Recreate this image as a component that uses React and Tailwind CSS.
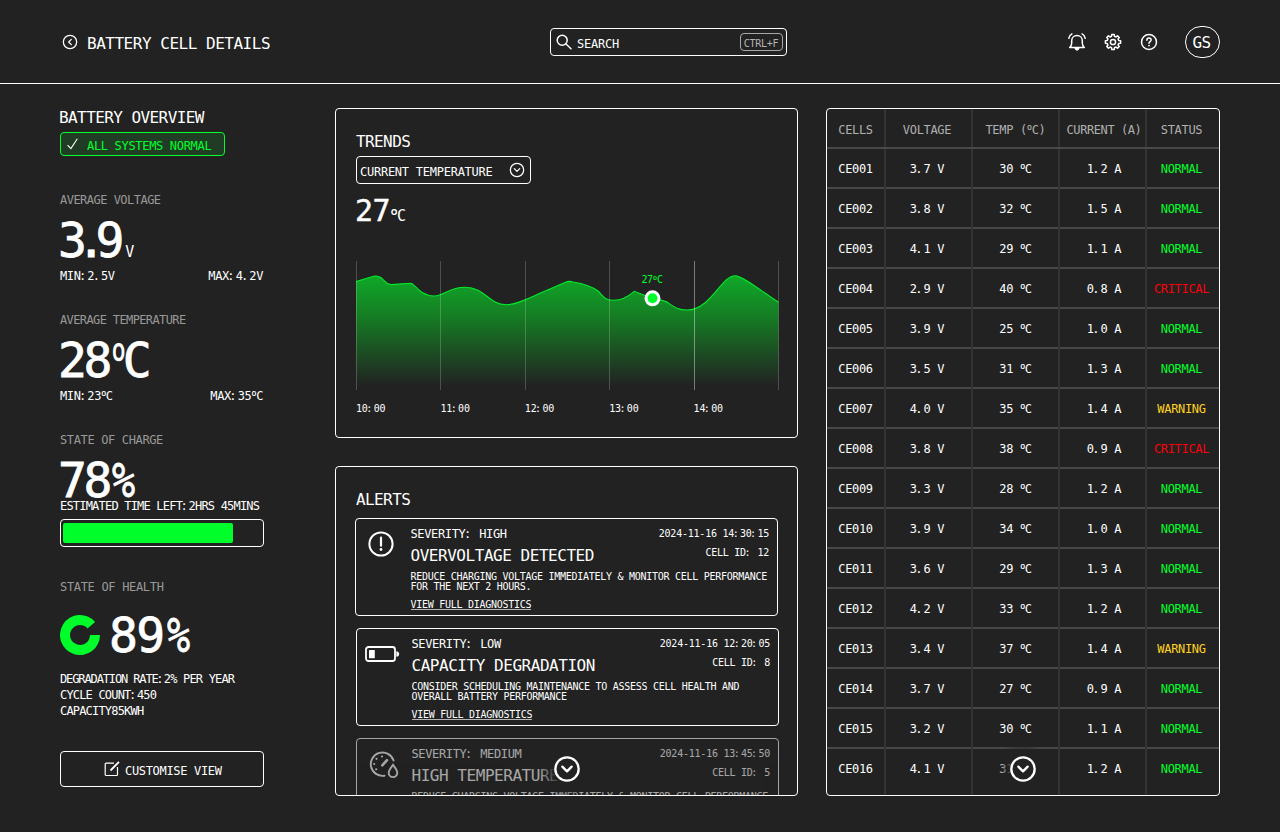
import React from 'react';
import { CircleChevronLeft, CircleChevronDown } from 'lucide-react';

const readings = [
  ['CE001', '3.7', '30', '1.2', 'NORMAL'],
  ['CE002', '3.8', '32', '1.5', 'NORMAL'],
  ['CE003', '4.1', '29', '1.1', 'NORMAL'],
  ['CE004', '2.9', '40', '0.8', 'CRITICAL'],
  ['CE005', '3.9', '25', '1.0', 'NORMAL'],
  ['CE006', '3.5', '31', '1.3', 'NORMAL'],
  ['CE007', '4.0', '35', '1.4', 'WARNING'],
  ['CE008', '3.8', '38', '0.9', 'CRITICAL'],
  ['CE009', '3.3', '28', '1.2', 'NORMAL'],
  ['CE010', '3.9', '34', '1.0', 'NORMAL'],
  ['CE011', '3.6', '29', '1.3', 'NORMAL'],
  ['CE012', '4.2', '33', '1.2', 'NORMAL'],
  ['CE013', '3.4', '37', '1.4', 'WARNING'],
  ['CE014', '3.7', '27', '0.9', 'NORMAL'],
  ['CE015', '3.2', '30', '1.1', 'NORMAL'],
  ['CE016', '4.1', '31', '1.2', 'NORMAL'],
];

const statusColor = {
  NORMAL: 'text-[#00ff2a]',
  WARNING: 'text-[#ffd21f]',
  CRITICAL: 'text-[#ff0008]',
};

const alerts = [
  {
    severity: 'HIGH',
    time: '2024-11-16 14:30:15',
    cell: '12',
    title: 'OVERVOLTAGE DETECTED',
    lines: ['REDUCE CHARGING VOLTAGE IMMEDIATELY & MONITOR CELL PERFORMANCE', 'FOR THE NEXT 2 HOURS.'],
    icon: 'alert',
  },
  {
    severity: 'LOW',
    time: '2024-11-16 12:20:05',
    cell: '8',
    title: 'CAPACITY DEGRADATION',
    lines: ['CONSIDER SCHEDULING MAINTENANCE TO ASSESS CELL HEALTH AND', 'OVERALL BATTERY PERFORMANCE'],
    icon: 'battery',
  },
  {
    severity: 'MEDIUM',
    time: '2024-11-16 13:45:50',
    cell: '5',
    title: 'HIGH TEMPERATURE',
    lines: ['REDUCE CHARGING VOLTAGE IMMEDIATELY & MONITOR CELL PERFORMANCE'],
    icon: 'gauge',
  },
];

const hours = ['10:00', '11:00', '12:00', '13:00', '14:00'];

const curve =
  'M356 281.7 L371 277 Q377 274.5 381.5 278 C385 281 386 284.6 391 284.6 C399 284.4 404 283.4 411 283.2 C415 284 420 296 434 296 C445 296 448 287.2 465 287.2 C485 287.2 489 304.8 506 304.8 C516 304.8 527 299 540 293.3 L566 282 Q569 280.8 573 282 C585 284 592 286.5 598 291 C604 297 605 300.3 614 300.3 C624 300.3 631 294 634.3 291.3 L645 295.5 L666 301.6 C672 305 676 310 687 310 C711 310 721 275.7 735 275.7 C742 275.7 760 290 778.5 302.3';

// Colons and full stops hang at the left of their slot
const Txt = ({ children }) =>
  children.split(/([:.])/).map((part, i) =>
    part === ':' || part === '.' ? (
      <span key={i} className="-ml-[1.5px] mr-[1.5px]">{part}</span>
    ) : (
      part
    )
  );

// Label and value sit tight against each other, so this space takes no room
const Tight = () => <span className="tracking-[-7.22px]"> </span>;

const Deg = () => <span className="font-[Roboto] text-[12px] tracking-[-0.6px]">º</span>;

const Percent = ({ className }) => (
  <span className={`inline-block w-6 origin-left scale-x-[0.8] tracking-normal ${className}`}>%</span>
);

const SearchIcon = () => (
  <svg width="16" height="16" viewBox="0 0 16 16" fill="none" stroke="currentColor" strokeWidth="1.500" strokeLinecap="round">
    <circle cx="6.200" cy="6.200" r="5" />
    <path d="M10 10l5 4.700" />
  </svg>
);

const BellIcon = () => (
  <svg width="20" height="20" viewBox="0 0 20 20" fill="none" stroke="currentColor" strokeWidth="1.500" strokeLinecap="round" strokeLinejoin="round">
    <path d="M2.700 15.500h14.600c-1.500-1.300-2-2.600-2-4.500V8.700c0-3-2.300-5.200-5.300-5.200s-5.300 2.200-5.300 5.200V11c0 1.900-.5 3.200-2 4.500z" />
    <path d="M1.800 6.300C2.200 4.300 3.200 2.700 4.900 1.800M18.200 6.300C17.800 4.300 16.800 2.700 15.100 1.800" />
    <path d="M8 16h4c0 1.500-.9 2.200-2 2.200S8 17.500 8 16z" fill="currentColor" strokeWidth=".8" />
  </svg>
);

const gearPath = () => {
  const points = [];
  for (let i = 0; i < 8; i++) {
    [[-14, 5.9], [-9, 7.7], [9, 7.7], [14, 5.9]].forEach(([offset, r]) => {
      const a = ((i * 45 + offset) * Math.PI) / 180;
      points.push(`${(r * Math.cos(a)).toFixed(2)} ${(r * Math.sin(a)).toFixed(2)}`);
    });
  }
  return `M${points.join('L')}Z`;
};

const GearIcon = () => (
  <svg width="18" height="18" viewBox="-9 -9 18 18" fill="none" stroke="currentColor" strokeWidth="1.500" strokeLinejoin="round">
    <path d={gearPath()} />
    <circle r="2.600" />
  </svg>
);

const HelpIcon = () => (
  <svg width="18" height="18" viewBox="0 0 18 18" fill="none" stroke="currentColor" strokeWidth="1.500" strokeLinecap="round">
    <circle cx="9" cy="9" r="7.500" />
    <path d="M6.900 7.200c0-1.300.9-2.100 2.100-2.100s2.100.8 2.100 1.900c0 1.500-2.100 1.600-2.100 3.200" />
    <circle cx="9" cy="12.600" r=".9" fill="currentColor" stroke="none" />
  </svg>
);

const AlertIcon = () => (
  <svg width="26" height="26" viewBox="0 0 26 26" fill="none" stroke="currentColor">
    <circle cx="13" cy="13" r="11.600" strokeWidth="2" />
    <path d="M13 6.700v8" strokeWidth="2.200" strokeLinecap="round" />
    <circle cx="13" cy="18.500" r="1.400" fill="currentColor" stroke="none" />
  </svg>
);

const BatteryIcon = () => (
  <svg width="35" height="16" viewBox="0 0 35 16" fill="none">
    <rect x="1" y="1" width="29" height="14" rx="2.500" stroke="currentColor" strokeWidth="1.800" />
    <rect x="4" y="4" width="5.800" height="8.300" rx=".5" fill="currentColor" />
    <path d="M31.300 5.200C33.200 5.400 34.200 6.500 34.200 8S33.200 10.600 31.300 10.800z" fill="currentColor" />
  </svg>
);

const GaugeIcon = () => (
  <svg width="30" height="28" viewBox="0 0 30 28" fill="none" stroke="currentColor" strokeWidth="1.900" strokeLinecap="round" className="ml-[3px] mt-[2px]">
    <path d="M15.500 24.700A11.700 11.700 0 1 1 24.600 9.500" />
    <path d="M13.300 14.300L18 9.200" strokeWidth="2.600" />
    <path d="M24 13.800c2.200 3 4.300 5.500 4.300 8a4.300 4.300 0 0 1-8.600 0c0-2.500 2.100-5 4.300-8z" />
    <g fill="currentColor" stroke="none">
      <circle cx="13" cy="5.500" r="1.100" />
      <circle cx="7.500" cy="7.800" r="1.100" />
      <circle cx="5.200" cy="13" r="1.100" />
      <circle cx="7.200" cy="18.300" r="1.100" />
    </g>
  </svg>
);

const EditIcon = () => (
  <svg width="16" height="16" viewBox="0 0 16 16" fill="none" stroke="currentColor" strokeWidth="1.200">
    <path d="M10 2.200H2.200a1 1 0 0 0-1 1v10.300a1 1 0 0 0 1 1h10.300a1 1 0 0 0 1-1V6" />
    <path d="M6.500 9.500L15 .8" strokeWidth="1.800" />
  </svg>
);

const alertIcons = {
  alert: <AlertIcon />,
  battery: <BatteryIcon />,
  gauge: <GaugeIcon />,
};

const Label = ({ children, className }) => (
  <p className={`h-4 text-[12px] leading-4 text-[#999999] ${className}`}>{children}</p>
);

const Header = () => (
  <header className="flex h-[84px] items-center justify-between border-b border-white px-[60px]">
    <div className="flex w-[490px] items-center">
      <CircleChevronLeft size={16} strokeWidth={1.900} className="ml-[2px] mt-[1px]" />
      <h1 className="ml-[9px] mt-[4px] text-[16px] leading-5 tracking-[-0.48px]">BATTERY CELL DETAILS</h1>
    </div>
    <div className="flex h-7 w-[237px] items-center rounded-[4px] border border-white pl-[5px] pr-[3px]">
      <SearchIcon />
      <span className="ml-[5px] mt-[4px] flex-1 text-[12px] leading-4 tracking-[-0.22px]">SEARCH</span>
      <kbd className="flex h-[18px] w-[43px] items-center justify-center rounded-[4px] border border-[#a8a8a8] pr-px pt-[3px] font-['DejaVu_Sans_Mono'] text-[10px] tracking-[-0.25px] text-[#b4b4b4]">
        CTRL+F
      </kbd>
    </div>
    <div className="flex w-[433px] items-center justify-end">
      <button className="mr-[17px]"><BellIcon /></button>
      <button className="mr-[18px]"><GearIcon /></button>
      <button className="mr-[27px]"><HelpIcon /></button>
      <span className="flex h-8 w-[35px] items-center justify-center rounded-full border border-white pr-[2px] pt-[3px] text-[16px] tracking-[-0.6px]">
        GS
      </span>
    </div>
  </header>
);

const Overview = () => (
  <aside className="w-[204px]">
    <h2 className="-ml-px h-[18px] text-[16px] leading-[20px] tracking-[-0.58px]">BATTERY OVERVIEW</h2>
    <div className="mt-[6px] flex h-6 w-[165px] items-center rounded-[4px] border border-[#00ff2a] bg-[#203c24] text-[#00ff2a]">
      <svg width="11" height="12" viewBox="0 0 11 12" fill="none" stroke="#fff" strokeWidth="1.100" className="ml-[6px]">
        <path d="M.6 7.200L3.900 10.600 10.300.8" />
      </svg>
      <span className="ml-[9px] mt-[3px] text-[12px] leading-4 tracking-[-0.32px]">ALL SYSTEMS NORMAL</span>
    </div>

    <Label className="mt-9 tracking-[-0.52px]">AVERAGE VOLTAGE</Label>
    <div className="mt-3 -ml-[2px] flex h-[42px] items-baseline text-[48px] leading-[40px] [-webkit-text-stroke:0.8px_white]">
      <span className="tracking-[-10.200px]">3.</span>9
      <span className="ml-px text-[15px] tracking-normal [-webkit-text-stroke:0px]">V</span>
    </div>
    <div className="mt-[6px] flex h-4 justify-between pr-px text-[12px] leading-4 tracking-[-0.400px]">
      <span><Txt>MIN:</Txt><Tight /><Txt>2.5V</Txt></span>
      <span><Txt>MAX:</Txt><Tight /><Txt>4.2V</Txt></span>
    </div>

    <Label className="mt-7 tracking-[-0.62px]">AVERAGE TEMPERATURE</Label>
    <div className="mt-3 -ml-[2px] flex h-[42px] items-baseline text-[48px] leading-[40px] tracking-[-3.500px] [-webkit-text-stroke:0.8px_white]">
      28
      <span className="ml-[2px] inline-block w-[12px] origin-left scale-x-[0.7] font-[Roboto] tracking-normal [-webkit-text-stroke:0px]">º</span>
      <span>C</span>
    </div>
    <div className="mt-[6px] flex h-4 justify-between pr-px text-[12px] leading-4 tracking-[-0.400px]">
      <span><Txt>MIN:</Txt><Tight />23<Deg />C</span>
      <span><Txt>MAX:</Txt><Tight />35<Deg />C</span>
    </div>

    <Label className="mt-7 tracking-[-0.36px]">STATE OF CHARGE</Label>
    <div className="mt-3 -ml-[2px] flex h-[42px] text-[48px] leading-[40px] tracking-[-3.500px] [-webkit-text-stroke:0.8px_white]">
      78<Percent className="ml-[3px]" />
    </div>
    <p className="-mt-1 h-4 whitespace-nowrap text-[12px] leading-4 tracking-[-0.8px]">
      <Txt>ESTIMATED TIME LEFT:</Txt><Tight />2HRS 45MINS
    </p>
    <div className="mt-[5px] h-7 rounded-[4px] border border-white px-[2px] py-[3px]">
      <div className="h-5 w-[170px] rounded-[2px] bg-[#00ff2a]" />
    </div>

    <Label className="mt-8 tracking-[-0.32px]">STATE OF HEALTH</Label>
    <div className="mt-5 flex h-10 items-center">
      <svg width="40" height="40" viewBox="-20 -20 40 40">
        <path d="M20 0A20 20 0 1 1 15.100-13.100L7.500-6.600A10 10 0 1 0 10 0z" fill="#00ff2a" />
      </svg>
      <div className="ml-[9px] flex text-[48px] leading-10 tracking-[-1.600px] [-webkit-text-stroke:0.8px_white]">
        89<Percent className="ml-[3px]" />
      </div>
    </div>
    <div className="mt-4 whitespace-nowrap text-[12px] leading-4 tracking-[-0.820px]">
      <p><span className="tracking-[-1.120px]"><Txt>DEGRADATION RATE:</Txt></span><Tight />2% PER YEAR</p>
      <p><Txt>CYCLE COUNT:</Txt><Tight />450</p>
      <p>CAPACITY<Tight />85KWH</p>
    </div>
    <button className="mt-8 flex h-9 w-full items-center rounded-[4px] border border-white pl-[43px]">
      <EditIcon />
      <span className="ml-[5px] mt-[4px] text-[12px] leading-4 tracking-[-0.32px]">CUSTOMISE VIEW</span>
    </button>
  </aside>
);

const TrendChart = () => (
  <svg width="424" height="129" viewBox="356 261 424 129" className="mt-[37px] block">
    <defs>
      <linearGradient id="area" x1="0" y1="276" x2="0" y2="386" gradientUnits="userSpaceOnUse">
        <stop offset="0" stopColor="#0fa828" />
        <stop offset=".35" stopColor="#157f24" />
        <stop offset="1" stopColor="#222222" />
      </linearGradient>
    </defs>
    <path d={`${curve}V386H356z`} fill="url(#area)" />
    <path d={curve} fill="none" stroke="#00ea2a" strokeWidth="1.100" />
    {[356.5, 440.5, 525.5, 609.5, 694.5, 778.5].map((x) => (
      <path key={x} d={`M${x} 261V390`} stroke="#fff" strokeOpacity={x === 694.5 ? 0.4 : 0.2} />
    ))}
    <circle cx="652.500" cy="298.300" r="6.500" fill="#00ff2a" stroke="#fff" strokeWidth="3" />
    <text x="641.500" y="283" fontSize="10" letterSpacing="-0.4" fill="#00ff2a">
      27<tspan fontFamily="Roboto">º</tspan>C
    </text>
  </svg>
);

const Trends = () => (
  <section className="h-[330px] rounded-[4px] border border-white pl-5 pt-[22px]">
    <h2 className="h-5 text-[16px] leading-[22px] tracking-[-0.600px]">TRENDS</h2>
    <button className="mt-[5px] flex h-7 w-[175px] items-center justify-between rounded-[4px] border border-white pl-[3px] pr-[5px]">
      <span className="mt-[3px] text-[12px] leading-4 tracking-[-0.25px]">CURRENT TEMPERATURE</span>
      <CircleChevronDown size={16} strokeWidth={1.900} />
    </button>
    <div className="-ml-px mt-3 flex h-7 items-baseline text-[30px] leading-[29px] tracking-[-0.500px]">
      <span className="[-webkit-text-stroke:0.4px_white]">27</span>
      <span className="font-[Roboto] text-[17px] tracking-[-1px]">º</span>
      <span className="text-[15px]">C</span>
    </div>
    <TrendChart />
    <div className="mt-[11px] flex text-[10px] leading-4 tracking-[-0.150px]">
      {hours.map((h) => (
        <span key={h} className="w-[84.4px]"><Txt>{h}</Txt></span>
      ))}
    </div>
  </section>
);

const AlertCard = ({ alert, className }) => (
  <article className={`flex h-[98px] w-[423px] shrink-0 rounded-[4px] border pr-2 pt-[7px] ${className}`}>
    <div className="flex h-9 w-[50px] shrink-0 items-center justify-center">{alertIcons[alert.icon]}</div>
    <div className="min-w-0 flex-1 pl-[4.5px]">
      <div className="flex h-4 items-start justify-between">
        <span className="text-[12px] leading-4 tracking-[-0.35px]"><Txt>{`SEVERITY: ${alert.severity}`}</Txt></span>
        <span className="text-[10px] leading-[15px] tracking-[-0.22px]"><Txt>{alert.time}</Txt></span>
      </div>
      <div className="mt-[3px] flex h-5 justify-between">
        <h3 className="text-[16px] leading-[22px] tracking-[-0.46px]">{alert.title}</h3>
        <span className="text-[10px] leading-4 tracking-[-0.24px]"><Txt>{`CELL ID: ${alert.cell}`}</Txt></span>
      </div>
      <div className="mt-[7px] h-5 whitespace-nowrap text-[10px] leading-[10px] tracking-[-0.270px]">
        {alert.lines.map((line) => (
          <p key={line}>{line}</p>
        ))}
      </div>
      <a className="mt-[7px] block h-[11px] w-fit border-b border-[#b5b5b5] text-[10px] leading-[12px] tracking-[-0.27px]">VIEW FULL DIAGNOSTICS</a>
    </div>
  </article>
);

const MoreButton = ({ className }) => (
  <button
    className={`absolute flex h-[60px] w-[60px] items-center justify-center bg-[radial-gradient(circle_at_center,#222222_0px,#222222_11px,transparent_28px)] ${className}`}
  >
    <CircleChevronDown size={28} strokeWidth={2} />
  </button>
);

const Alerts = () => (
  <section className="relative mt-7 h-[330px] overflow-hidden rounded-[4px] border border-white pl-[19px] pt-[22px]">
    <h2 className="ml-px h-5 text-[16px] leading-[22px] tracking-[-0.600px]">ALERTS</h2>
    <div className="mt-[9px] flex flex-col gap-3">
      <AlertCard alert={alerts[0]} className="border-white" />
      <AlertCard alert={alerts[1]} className="ml-px border-white" />
      <AlertCard alert={alerts[2]} className="ml-px border-white opacity-60" />
    </div>
    <MoreButton className="left-[201px] top-[272px]" />
  </section>
);

const CellTable = () => (
  <section className="relative ml-7 h-[688px] w-[394px] overflow-hidden rounded-[4px] border border-white">
    <div className="grid h-10 grid-cols-[59px_87px_87px_87px_72px] border-b-2 border-[#484848] text-center text-[12px] leading-[42px] tracking-[-0.33px] text-[#b0b0b0]">
      <span className="h-[38px] border-r-2 border-[#333333]">CELLS</span>
      <span className="h-[38px] border-r-2 border-[#333333] pr-[3px]">VOLTAGE</span>
      <span className="h-[38px] border-r-2 border-[#333333]">TEMP (<Deg />C)</span>
      <span className="h-[38px] border-r-2 border-[#333333] pl-[3px] tracking-[-0.42px]">CURRENT (A)</span>
      <span className="pr-[3px]">STATUS</span>
    </div>
    {readings.map(([id, volt, temp, amp, status]) => (
      <div
        key={id}
        className="grid h-10 grid-cols-[59px_87px_87px_87px_72px] border-b-2 border-[#484848] text-center text-[12px] leading-[41px] tracking-[-0.33px] last-of-type:h-[48px]"
      >
        <span className="h-full border-r-2 border-[#333333]">{id}</span>
        <span className="h-full border-r-2 border-[#333333] pr-[3px]"><Txt>{`${volt} V`}</Txt></span>
        <span className="h-full border-r-2 border-[#333333]">{temp} <Deg />C</span>
        <span className="h-full border-r-2 border-[#333333] pl-[3px]"><Txt>{`${amp} A`}</Txt></span>
        <span className={`pr-[3px] ${statusColor[status]}`}>{status}</span>
      </div>
    ))}
    <MoreButton className="left-[166px] top-[630px]" />
  </section>
);

export default function App() {
  return (
    <div className="h-[832px] w-[1280px] overflow-hidden bg-[#222222] font-['DejaVu_Sans_Mono',monospace] text-white">
      <Header />
      <main className="flex px-[60px] pt-6">
        <Overview />
        <div className="ml-[71px] w-[463px]">
          <Trends />
          <Alerts />
        </div>
        <CellTable />
      </main>
    </div>
  );
}
